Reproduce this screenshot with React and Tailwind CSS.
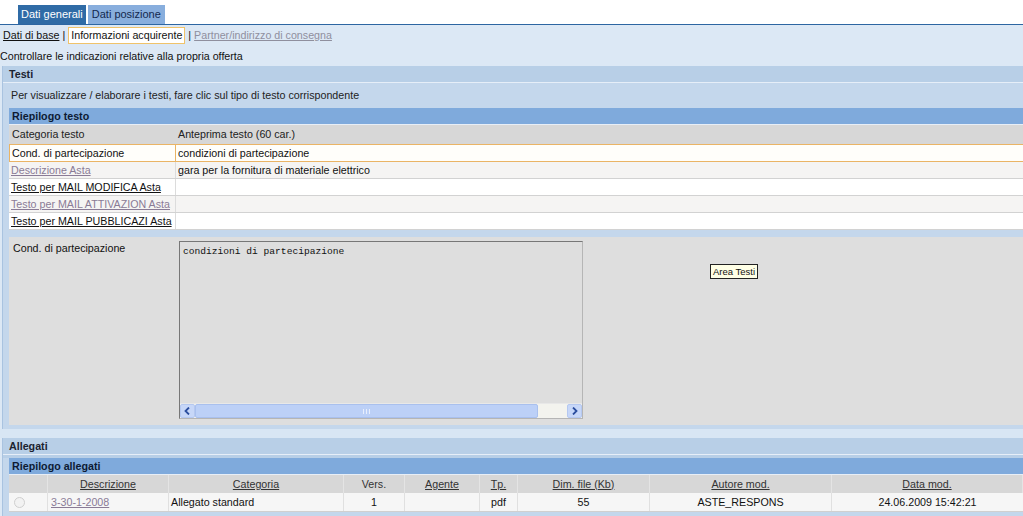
import React from 'react';

const rows = [
  { cat: 'Cond. di partecipazione', prev: 'condizioni di partecipazione', kind: 'selected' },
  { cat: 'Descrizione Asta', prev: 'gara per la fornitura di materiale elettrico', kind: 'visited' },
  { cat: 'Testo per MAIL MODIFICA Asta', prev: '', kind: 'link' },
  { cat: 'Testo per MAIL ATTIVAZION Asta', prev: '', kind: 'visited' },
  { cat: 'Testo per MAIL PUBBLICAZI Asta', prev: '', kind: 'link' },
];

const cols = [
  { label: '', w: 'w-[39px]' },
  { label: 'Descrizione', w: 'w-[121px]', link: true },
  { label: 'Categoria', w: 'w-[175px]', link: true },
  { label: 'Vers.', w: 'w-[61px]' },
  { label: 'Agente', w: 'w-[75px]', link: true },
  { label: 'Tp.', w: 'w-[38px]', link: true },
  { label: 'Dim. file (Kb)', w: 'w-[132px]', link: true },
  { label: 'Autore mod.', w: 'w-[182px]', link: true },
  { label: 'Data mod.', w: 'flex-1', link: true },
];

const Arrow = ({ dir }) => (
  <div className="w-[15px] h-full bg-[#c7d7f8] border border-[#b5c8f0] rounded-[2px] flex items-center justify-center">
    <svg width="7" height="8" viewBox="0 0 7 8">
      <path
        d={dir === 'left' ? 'M5 0.5 L1.5 4 L5 7.5' : 'M2 0.5 L5.5 4 L2 7.5'}
        fill="none"
        stroke="#2b4d9e"
        strokeWidth="1.8"
      />
    </svg>
  </div>
);

const Scrollbar = () => (
  <div className="flex h-[15px] bg-[#f3f3ee] border-t border-[#e8e8e8]">
    <Arrow dir="left" />
    <div className="w-[343px] h-full bg-[#bcd0f7] border border-[#a9c0ee] rounded-[2px] flex items-center justify-center">
      <div className="w-[7px] h-[5px] border-x border-[#e8eefc] flex justify-center">
        <div className="w-px h-full bg-[#e8eefc]" />
      </div>
    </div>
    <div className="flex-1" />
    <Arrow dir="right" />
  </div>
);

export default function App() {
  return (
    <div className="w-[1023px] h-[516px] overflow-hidden bg-[#dce8f5] text-[10.7px] text-[#111] font-['Liberation_Sans',Arial,sans-serif] leading-none whitespace-nowrap">
      {/* tabs */}
      <div className="h-[25px] bg-white flex items-end pl-[18px] gap-[2px] border-b border-[#2d66a2]">
        <div className="h-[19px] px-[3px] bg-[#2f6ba6] text-white flex items-center text-[11px]">Dati generali</div>
        <div className="h-[19px] px-[4px] bg-[#88aedd] text-[#13284f] flex items-center text-[11px]">Dati posizione</div>
      </div>

      {/* sub navigation */}
      <div className="h-[21px] flex items-center pl-[3px]">
        <span className="underline text-[#111]">Dati di base</span>
        <span className="mx-[3px]">|</span>
        <span className="h-[17px] px-[2px] bg-white border border-[#f0c36a] flex items-center">Informazioni acquirente</span>
        <span className="mx-[3px]">|</span>
        <span className="underline text-[#8f8f9e]">Partner/indirizzo di consegna</span>
      </div>

      <div className="h-[20px] flex items-center">Controllare le indicazioni relative alla propria offerta</div>

      {/* Testi panel */}
      <div className="ml-[2px] bg-[#c4d7ec] border-l border-[#a9c3e0]">
        <div className="h-[17px] bg-[#b8cfe7] flex items-center pl-[6px] font-bold text-[#1b2230] border-b border-[#e6eef8]">
          Testi
        </div>
        <div className="h-[25px] flex items-center pl-[8px] text-[#222]">
          Per visualizzare / elaborare i testi, fare clic sul tipo di testo corrispondente
        </div>
        <div className="ml-[6px]">
          <div className="h-[17px] bg-[#7faadc] flex items-center pl-[3px] font-bold text-[#0d1a33] border-b border-[#e8eef6]">
            Riepilogo testo
          </div>
          <div className="h-[19px] bg-[#d7d7d7] flex items-center text-[#222]">
            <div className="w-[167px] pl-[3px]">Categoria testo</div>
            <div className="pl-[2px]">Anteprima testo (60 car.)</div>
          </div>
          {rows.map((r, i) => {
            const sel = r.kind === 'selected';
            return (
              <div
                key={i}
                className={
                  sel
                    ? 'h-[18px] flex bg-[#fffefa] border-y border-[#eab465]'
                    : i % 2 === 1
                    ? 'h-[17px] flex bg-[#f5f4f3] border-b border-[#d2d2d2]'
                    : 'h-[17px] flex bg-white border-b border-[#d2d2d2]'
                }
              >
                <div
                  className={
                    sel
                      ? 'w-[167px] pl-[2px] flex items-center border-x border-[#eab465]'
                      : 'w-[167px] pl-[2px] flex items-center border-r border-[#dcdcdc]'
                  }
                >
                  <span
                    className={
                      r.kind === 'visited'
                        ? 'underline text-[#8a7b96]'
                        : r.kind === 'link'
                        ? 'underline text-[#111]'
                        : 'text-[#111]'
                    }
                  >
                    {r.cat}
                  </span>
                </div>
                <div className="flex-1 flex items-center pl-[2px]">{r.prev}</div>
              </div>
            );
          })}
          <div className="h-[7px]" />
          {/* detail */}
          <div className="bg-[#dedede] flex h-[188px]">
            <div className="w-[170px] pl-[4px] pt-[6px]">Cond. di partecipazione</div>
            <div className="pt-[4px] relative flex-1">
              <div className="w-[404px] h-[178px] border border-[#777] border-r-[#b5b5b5] border-b-[#b5b5b5] flex flex-col">
                <div className="flex-1 pl-[3px] pt-[5px] font-['Liberation_Mono',monospace] text-[9.6px] text-[#111]">
                  condizioni di partecipazione
                </div>
                <Scrollbar />
              </div>
              <div className="absolute left-[531px] top-[27px] h-[15px] px-[2px] bg-[#ffffe6] border border-[#222] flex items-center text-[9.5px]">
                Area Testi
              </div>
            </div>
          </div>
        </div>
        <div className="h-[4px]" />
      </div>

      <div className="h-[9px] bg-[#d8e6f4]" />

      {/* Allegati panel */}
      <div className="ml-[2px] bg-[#c4d7ec] border-l border-[#a9c3e0] h-[200px]">
        <div className="h-[17px] bg-[#b8cfe7] flex items-center pl-[6px] font-bold text-[#1b2230] border-b border-[#e6eef8]">
          Allegati
        </div>
        <div className="h-[3px] bg-[#b8cfe7]" />
        <div className="ml-[6px]">
          <div className="h-[17px] bg-[#7faadc] flex items-center pl-[3px] font-bold text-[#0d1a33] border-b border-[#e8eef6]">
            Riepilogo allegati
          </div>
          <div className="h-[18px] bg-[#d7d7d7] flex text-[#333]">
            {cols.map((c, i) => (
              <div key={i} className={`${c.w} flex items-center justify-center border-r border-[#e4e4e4]`}>
                <span className={c.link ? 'underline' : ''}>{c.label}</span>
              </div>
            ))}
          </div>
          <div className="h-[19px] bg-[#f6f6f6] flex text-[#111] border-b border-[#d0d0d0]">
            <div className="w-[39px] flex items-center pl-[5px] border-r border-[#e0e0e0]">
              <div className="w-[11px] h-[11px] rounded-full border border-[#cfcfcf] bg-[#f2f2f2]" />
            </div>
            <div className="w-[121px] flex items-center pl-[3px] border-r border-[#e0e0e0]">
              <span className="underline text-[#8a7b96]">3-30-1-2008</span>
            </div>
            <div className="w-[175px] flex items-center pl-[2px] border-r border-[#e0e0e0]">Allegato standard</div>
            <div className="w-[61px] flex items-center justify-center border-r border-[#e0e0e0]">1</div>
            <div className="w-[75px] border-r border-[#e0e0e0]" />
            <div className="w-[38px] flex items-center justify-center border-r border-[#e0e0e0]">pdf</div>
            <div className="w-[132px] flex items-center justify-center border-r border-[#e0e0e0]">55</div>
            <div className="w-[182px] flex items-center justify-center border-r border-[#e0e0e0]">ASTE_RESPONS</div>
            <div className="flex-1 flex items-center justify-center">24.06.2009 15:42:21</div>
          </div>
        </div>
      </div>
    </div>
  );
}
